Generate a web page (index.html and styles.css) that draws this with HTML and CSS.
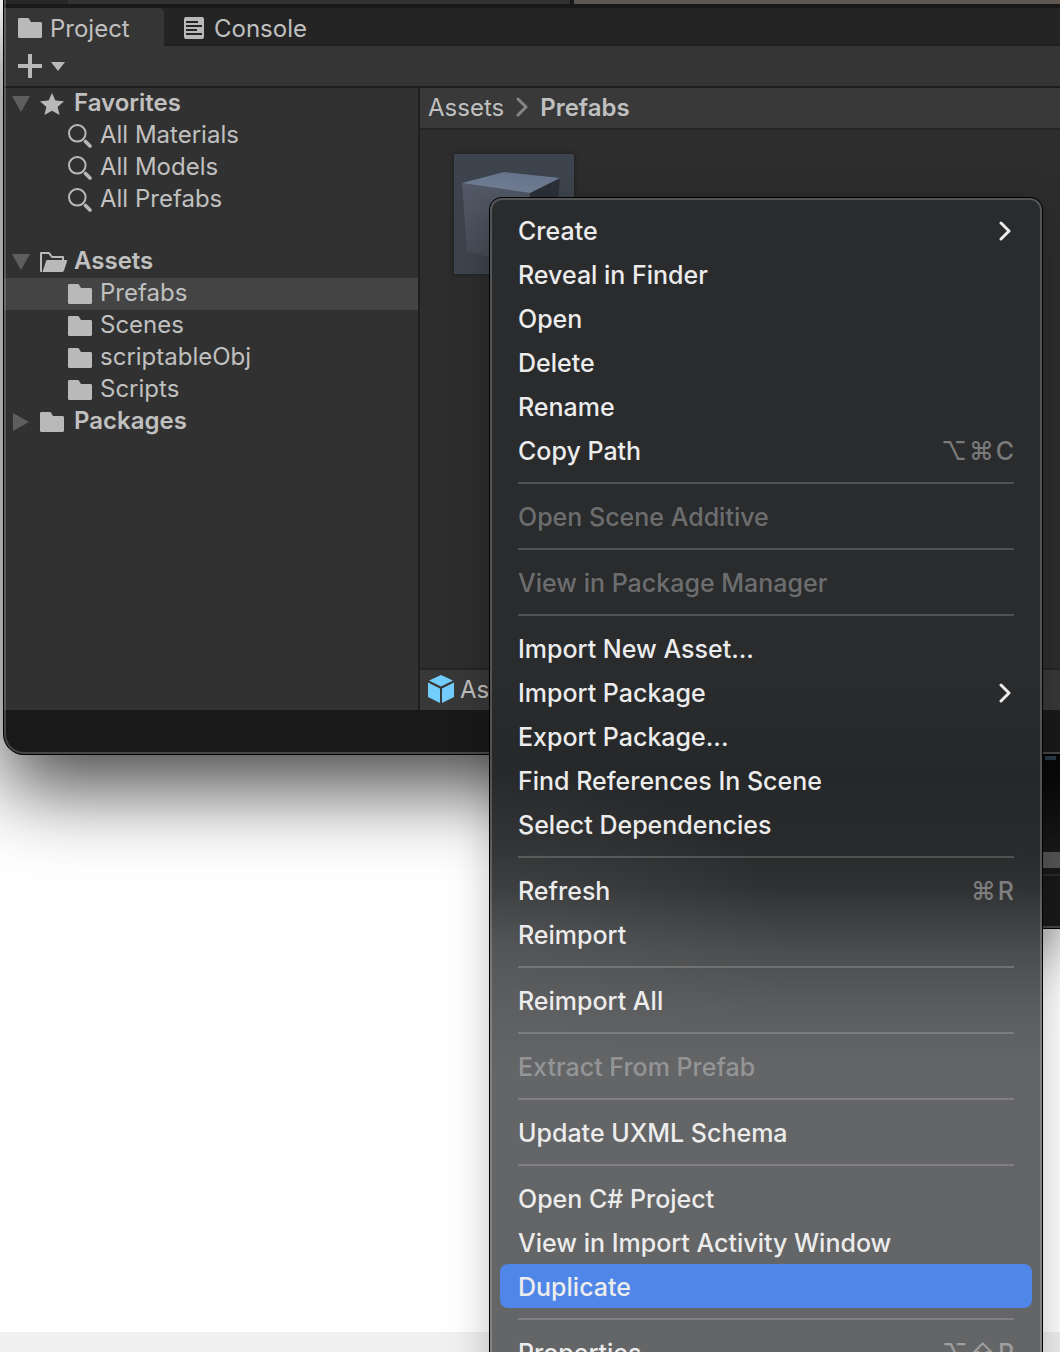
FILE: index.html
```html
<!DOCTYPE html>
<html lang="en">
<head>
<meta charset="UTF-8">
<meta name="viewport" content="width=device-width, initial-scale=1.0">
<title>Project</title>
<link rel="stylesheet" href="styles.css">
</head>
<body>
<!-- shared icons -->
<svg class="defs" width="0" height="0" aria-hidden="true">
  <symbol id="folder" viewBox="0 0 24 20"><path d="M1.5 0H9.5C10.5 0 11 .5 11.3 1.2L13 4H22.5C23.4 4 24 4.6 24 5.5V18.5C24 19.4 23.4 20 22.5 20H1.5C.6 20 0 19.4 0 18.5V1.5C0 .6 .6 0 1.5 0Z"/></symbol>
  <symbol id="search" viewBox="0 0 24 24"><circle cx="9.3" cy="9.3" r="8.3" fill="none" stroke="currentColor" stroke-width="2"/><path d="M17.5 17.5L22 22" stroke="currentColor" stroke-width="3.6" stroke-linecap="round"/></symbol>
  <symbol id="chevron" viewBox="0 0 12 20"><path d="M2 2L10 10L2 18" fill="none" stroke="currentColor" stroke-width="3" stroke-linecap="round" stroke-linejoin="round"/></symbol>
</svg>

<div class="window back-window">
  <div class="back-view"><span class="blue-bit"></span></div>
  <div class="back-scroll"></div>
  <div class="back-status"></div>
</div>

<main class="window editor">
  <div class="upper">
    <div class="upper-tab"></div>
    <div class="upper-left"></div>
    <div class="upper-scene"></div>
  </div>
  <nav class="tabs">
    <button class="tab active"><svg width="24" height="20"><use href="#folder"/></svg>Project</button>
    <button class="tab"><svg width="20" height="22" viewBox="0 0 20 22"><rect width="20" height="22" rx="2"/><path d="M2 5H14M2 9H18M2 13H13M2 17H18" stroke="#242424" stroke-width="2"/></svg>Console</button>
  </nav>
  <div class="toolbar">
    <button class="add" aria-label="Create">
      <svg width="24" height="24" viewBox="0 0 24 24"><path d="M10 0H14V10H24V14H14V24H10V14H0V10H10Z"/></svg>
      <svg width="14" height="9" viewBox="0 0 14 9"><path d="M0 0H14L7 9Z"/></svg>
    </button>
  </div>
  <div class="panels">
    <ul class="tree">
      <li class="row root"><svg class="arrow" viewBox="0 0 18 18"><path d="M0 1H18L9 17Z"/></svg><svg class="icon" width="24" height="22" viewBox="0 0 24 22"><path d="M12 0L15.4 7.4L24 8.3L17.6 13.9L19.6 22L12 17.8L4.4 22L6.4 13.9L0 8.3L8.6 7.4Z"/></svg><span>Favorites</span></li>
      <li class="row"><svg class="icon" width="24" height="24"><use href="#search"/></svg><span>All Materials</span></li>
      <li class="row"><svg class="icon" width="24" height="24"><use href="#search"/></svg><span>All Models</span></li>
      <li class="row"><svg class="icon" width="24" height="24"><use href="#search"/></svg><span>All Prefabs</span></li>
      <li class="row root group"><svg class="arrow" viewBox="0 0 18 18"><path d="M0 1H18L9 17Z"/></svg><svg class="icon open" width="28" height="20" viewBox="0 0 28 20"><path d="M2 19H1V1H9L12 5H23V8" fill="none" stroke="currentColor" stroke-width="2" stroke-linejoin="round"/><path d="M7.5 8H26C27 8 27.3 8.6 27 9.4L24 18.6C23.7 19.5 23.2 20 22.2 20H2.5L6 9.2C6.3 8.4 6.7 8 7.5 8Z"/></svg><span>Assets</span></li>
      <li class="row selected"><svg class="icon" width="24" height="20"><use href="#folder"/></svg><span>Prefabs</span></li>
      <li class="row"><svg class="icon" width="24" height="20"><use href="#folder"/></svg><span>Scenes</span></li>
      <li class="row"><svg class="icon" width="24" height="20"><use href="#folder"/></svg><span>scriptableObj</span></li>
      <li class="row"><svg class="icon" width="24" height="20"><use href="#folder"/></svg><span>Scripts</span></li>
      <li class="row root"><svg class="arrow" viewBox="0 0 18 18"><path d="M1 0L17 9L1 18Z"/></svg><svg class="icon" width="24" height="20"><use href="#folder"/></svg><span>Packages</span></li>
    </ul>
    <section class="browser">
      <div class="crumbs"><a href="#">Assets</a><svg width="12" height="20"><use href="#chevron"/></svg><b>Prefabs</b></div>
      <div class="assets">
        <svg class="thumb" width="120" height="120" viewBox="0 0 120 120">
          <defs>
            <linearGradient id="top" x1="0" y1="0" x2="0" y2="1"><stop offset="0" stop-color="#66748c"/><stop offset="1" stop-color="#758299"/></linearGradient>
            <linearGradient id="front" x1="0" y1="0" x2="0" y2="1"><stop offset="0" stop-color="#535967"/><stop offset="1" stop-color="#454a55"/></linearGradient>
          </defs>
          <rect width="120" height="120" fill="#3e444d"/>
          <path d="M8 29L76 39V114L13 97Z" fill="url(#front)"/>
          <path d="M76 39L106 24L100 90L76 114Z" fill="#2b303a"/>
          <path d="M8 29L50 18L106 24L76 39Z" fill="url(#top)"/>
        </svg>
      </div>
      <div class="path"><svg width="26" height="28" viewBox="0 0 26 28"><path d="M13 0L25 5.5L13 11.5L1 5.5Z M0 7.5L12 13.5V28L0 22Z M26 7.5L14 13.5V28L26 22Z" fill="#72cdfd"/></svg>As</div>
    </section>
  </div>
  <div class="status"></div>
</main>

<ul class="menu" role="menu">
  <li><button role="menuitem">Create<svg width="12" height="20"><use href="#chevron"/></svg></button></li>
  <li><button role="menuitem">Reveal in Finder</button></li>
  <li><button role="menuitem">Open</button></li>
  <li><button role="menuitem">Delete</button></li>
  <li><button role="menuitem">Rename</button></li>
  <li><button role="menuitem">Copy Path<span class="keys"><kbd>⌥</kbd><kbd>⌘</kbd><kbd>C</kbd></span></button></li>
  <li class="line" role="separator"></li>
  <li><button role="menuitem" disabled>Open Scene Additive</button></li>
  <li class="line" role="separator"></li>
  <li><button role="menuitem" disabled>View in Package Manager</button></li>
  <li class="line" role="separator"></li>
  <li><button role="menuitem">Import New Asset...</button></li>
  <li><button role="menuitem">Import Package<svg width="12" height="20"><use href="#chevron"/></svg></button></li>
  <li><button role="menuitem">Export Package...</button></li>
  <li><button role="menuitem">Find References In Scene</button></li>
  <li><button role="menuitem">Select Dependencies</button></li>
  <li class="line" role="separator"></li>
  <li><button role="menuitem">Refresh<span class="keys"><kbd>⌘</kbd><kbd>R</kbd></span></button></li>
  <li><button role="menuitem">Reimport</button></li>
  <li class="line" role="separator"></li>
  <li><button role="menuitem">Reimport All</button></li>
  <li class="line" role="separator"></li>
  <li><button role="menuitem" disabled>Extract From Prefab</button></li>
  <li class="line" role="separator"></li>
  <li><button role="menuitem">Update UXML Schema</button></li>
  <li class="line" role="separator"></li>
  <li><button role="menuitem">Open C# Project</button></li>
  <li><button role="menuitem">View in Import Activity Window</button></li>
  <li><button role="menuitem" class="hover">Duplicate</button></li>
  <li class="line" role="separator"></li>
  <li><button role="menuitem">Properties...<span class="keys"><kbd>⌥</kbd><kbd>⇧</kbd><kbd>P</kbd></span></button></li>
</ul>

<footer class="desktop-edge"></footer>
</body>
</html>
```
FILE: styles.css
```css
* {
  box-sizing: border-box;
}
body {
  margin: 0;
  height: 100vh;
  overflow: hidden;
  position: relative;
  display: flex;
  flex-direction: column;
  background: #fff;
  font-family: Inter, "Liberation Sans", sans-serif;
  font-size: 24px;
  color: #c0c0c0;
}
ul {
  list-style: none;
  margin: 0;
  padding: 0;
}
button {
  border: 0;
  background: none;
  font: inherit;
  color: inherit;
}
svg {
  flex: none;
  fill: currentColor;
}
.defs {
  position: absolute;
}

/* windows */
.window {
  background: #191919;
  overflow: hidden;
  box-shadow: 0 0 0 1px #000, 0 34px 80px rgba(0, 0, 0, .72);
}
.window::after {
  content: "";
  position: absolute;
  inset: 0;
  border: 2px solid rgba(255, 255, 255, .2);
  border-top: 0;
  border-right: 0;
  border-radius: inherit;
  pointer-events: none;
}
.editor {
  position: relative;
  margin-left: 4px;
  border-bottom-left-radius: 20px;
}
.back-window {
  position: absolute;
  top: 700px;
  left: 640px;
  right: 0;
  box-shadow: 0 0 0 1px #000, 0 20px 60px rgba(0, 0, 0, .5);
}
.back-view {
  height: 152px;
  padding: 56px 4px 0 0;
  background: linear-gradient(#0c0c0c 50%, #1a1a1a);
}
.blue-bit {
  display: block;
  width: 11px;
  height: 4px;
  margin-left: auto;
  background: #39576a;
}
.back-scroll {
  height: 16px;
  background: #565656;
}
.back-status {
  height: 60px;
  border-top: 6px solid #191919;
  box-shadow: inset 0 2px #2c2c2c;
}

/* bottom edge of the panels above */
.upper {
  display: flex;
  height: 8px;
  border-bottom: 4px solid #191919;
}
.upper-tab {
  width: 64px;
  background: #272727;
}
.upper-left {
  width: 502px;
  background: #323232;
}
.upper-scene {
  flex: 1;
  margin-left: 4px;
  background: #5f5750;
}

.tabs {
  display: flex;
  height: 38px;
  background: #242424;
  box-shadow: inset 0 -2px #1f1f1f;
}
.tab {
  display: flex;
  align-items: center;
  gap: 10px;
  padding: 2px 20px 0;
}
.tab.active {
  width: 160px;
  gap: 8px;
  padding-left: 14px;
  background: #353535;
  border-top-right-radius: 5px;
}
.tab svg,
.icon,
.add {
  color: #b9b9b9;
}
.toolbar {
  display: flex;
  height: 42px;
  padding-left: 14px;
  background: #353535;
  border-bottom: 2px solid #1f1f1f;
}
.add {
  display: flex;
  align-items: center;
  gap: 9px;
  padding: 0;
}

.panels {
  display: flex;
  min-height: 622px;
}
.tree {
  flex: 0 0 416px;
  background: #313131;
  border-right: 2px solid #1f1f1f;
}
.row {
  display: flex;
  align-items: center;
  gap: 8px;
  height: 32px;
  padding-left: 64px;
}
.row span {
  padding-bottom: 3px;
}
.root {
  gap: 10px;
  padding-left: 8px;
  font-weight: 600;
}
.group {
  margin-top: 30px;
}
.selected {
  background: #444;
}
.arrow {
  width: 18px;
  height: 18px;
  color: #5e5e5e;
}
.open {
  margin-right: -4px;
}
.browser {
  flex: 1;
  display: flex;
  flex-direction: column;
}
.crumbs {
  display: flex;
  align-items: center;
  gap: 12px;
  height: 42px;
  padding: 0 8px 2px;
  background: #393939;
  border-bottom: 2px solid #242424;
}
.crumbs a {
  color: inherit;
  text-decoration: none;
}
.crumbs b {
  font-weight: 600;
}
.crumbs svg {
  color: #858585;
}
.assets {
  flex: 1;
  padding: 24px 34px;
  background: #2d2d2d;
}
.thumb {
  display: block;
  box-shadow: 0 0 3px 1px #222;
}
.path {
  display: flex;
  align-items: center;
  gap: 6px;
  height: 42px;
  padding: 0 8px 2px;
  background: #383838;
  border-top: 2px solid #242424;
}
.status {
  height: 44px;
}

/* context menu */
.menu {
  position: absolute;
  top: 198px;
  left: 490px;
  width: 552px;
  padding: 10px;
  border-radius: 12px;
  background:
    radial-gradient(ellipse 300px 200px at 0 760px, rgba(100, 101, 103, .4), transparent),
    linear-gradient(#2a2b2d 0, #2a2b2d 480px, #252728 580px, #282a2b 650px, #303132 690px, #4a4b4c 750px, #5b5c5e 810px, #646567 870px);
  box-shadow: inset 0 0 0 2px rgba(255, 255, 255, .2), 0 0 0 1px #000, 0 10px 40px rgba(0, 0, 0, .25);
  font-size: 25px;
  font-weight: 500;
  color: #ececec;
}
.menu button {
  display: flex;
  align-items: center;
  justify-content: space-between;
  width: 100%;
  height: 44px;
  padding: 2px 18px 0;
  border-radius: 8px;
}
.menu button:disabled {
  color: rgba(255, 255, 255, .32);
}
.menu .hover {
  background: #4f86e8;
}
.menu svg {
  margin-right: 3px;
}
.line {
  height: 22px;
  padding: 10px 18px;
}
.line::before {
  content: "";
  display: block;
  height: 2px;
  background: rgba(255, 255, 255, .18);
}
.keys {
  display: flex;
  gap: 2px;
  color: rgba(255, 255, 255, .38);
}
kbd {
  font: inherit;
}

.desktop-edge {
  height: 20px;
  margin-top: auto;
  background: #f0f0f0;
}
```
